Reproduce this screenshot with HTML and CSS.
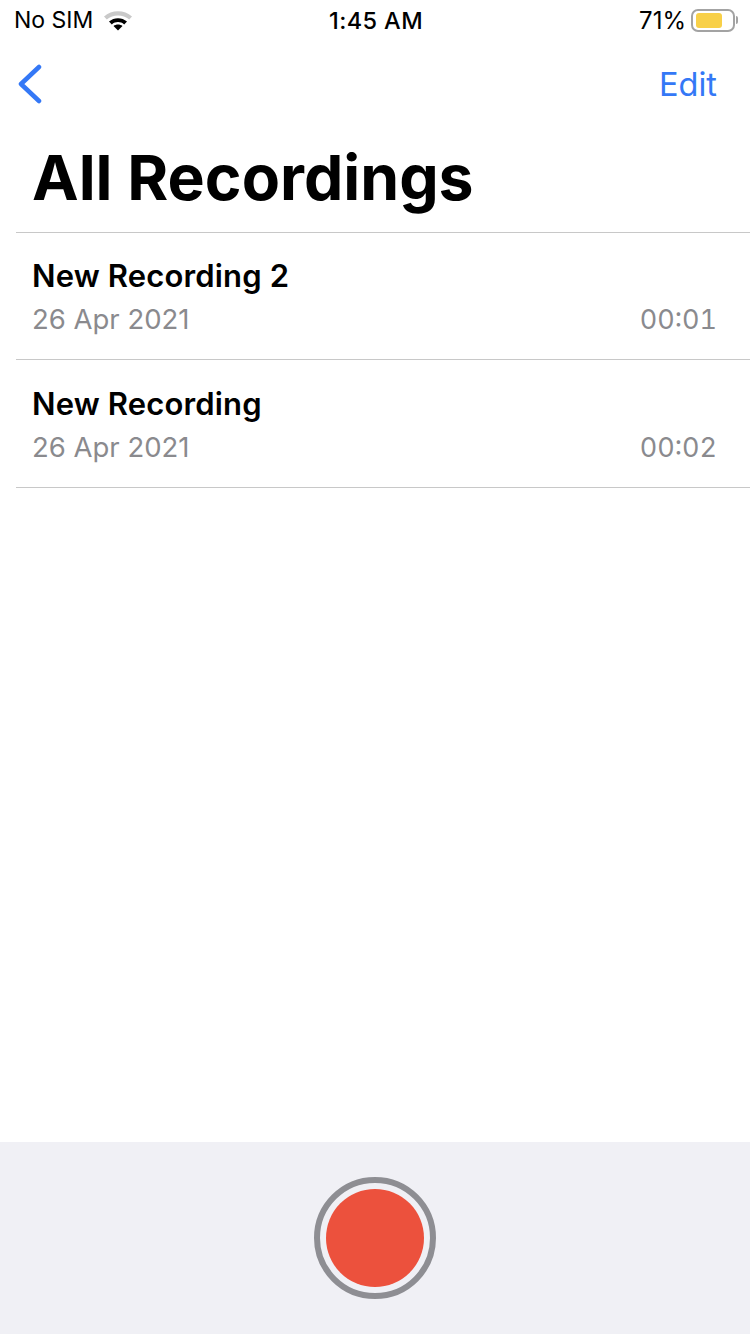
FILE: index.html
```html
<!DOCTYPE html>
<html lang="en">

<head>
   <meta charset="utf-8" />
   <title>All Recordings</title>
   <meta name="viewport" content="width=device-width, initial-scale=1">
   <link rel="stylesheet" href="styles.css">
</head>

<body>
   <div class="screen">
      <div class="status-bar">
         <div class="status-left">
            <span>No SIM</span>
            <svg class="wifi" width="30" height="22" viewBox="0 0 30 22">
               <path d="M1 7.500 C8.500 0.500 21.500 0.500 29 7.500 L26.200 10.500 C20 5 10 5 3.800 10.500 Z" fill="#c9c9c9" />
               <path d="M6 12.500 C11 8 19 8 24 12.500 L21.200 15.400 C17.500 12.300 12.500 12.300 8.800 15.400 Z" fill="#000" />
               <path d="M10.500 17 C13 15 17 15 19.500 17 L15 21.500 Z" fill="#000" />
            </svg>
         </div>
         <div class="status-time">1:45 AM</div>
         <div class="status-right">
            <span>71%</span>
            <div class="battery">
               <div class="battery-level"></div>
            </div>
            <div class="battery-cap"></div>
         </div>
      </div>

      <div class="nav-bar">
         <svg class="back" width="26" height="40" viewBox="0 0 26 40">
            <path d="M22 3 L4 20 L22 37" fill="none" stroke="#3478f6" stroke-width="4.500" stroke-linecap="round"
               stroke-linejoin="round" />
         </svg>
         <a class="edit" href="#">Edit</a>
      </div>

      <h1 class="title">All Recordings</h1>

      <ul class="recordings">
         <li class="recording">
            <div class="recording-name">New Recording 2</div>
            <div class="recording-meta">
               <span>26 Apr 2021</span>
               <span class="recording-length">00:01</span>
            </div>
         </li>
         <li class="recording">
            <div class="recording-name">New Recording</div>
            <div class="recording-meta">
               <span>26 Apr 2021</span>
               <span class="recording-length">00:02</span>
            </div>
         </li>
      </ul>

      <div class="record-bar">
         <button class="record-ring" aria-label="Record">
            <span class="record-dot"></span>
         </button>
      </div>
   </div>
</body>

</html>
```

FILE: styles.css
```css
* {
   box-sizing: border-box
}

html,
body {
   margin: 0;
   padding: 0;
}

body {
   background: #fff;
   color: #000;
   font-family: "Inter", "Liberation Sans", sans-serif;
}

.screen {
   width: 750px;
   height: 1334px;
   display: flex;
   flex-direction: column;
   overflow: hidden;
}

.status-bar {
   height: 40px;
   padding: 0 12px 0 14px;
   display: grid;
   grid-template-columns: 1fr auto 1fr;
   align-items: center;
   font-size: 23px;
}

.status-left {
   display: flex;
   align-items: center;
   gap: 10px;
}

.status-time {
   font-size: 23.500px;
   font-weight: 500;
   letter-spacing: 0.400px;
}

.status-right {
   display: flex;
   align-items: center;
   justify-content: flex-end;
}

.status-right span {
   font-size: 24px;
}

.battery {
   width: 44px;
   height: 23px;
   margin-left: 5px;
   padding: 2px 3px;
   border: 2px solid #a3a3a3;
   border-radius: 7px;
}

.battery-level {
   width: 26px;
   height: 100%;
   background: #f8d048;
   border-radius: 3px;
}

.battery-cap {
   width: 2px;
   height: 8px;
   margin-left: 1px;
   background: #a3a3a3;
   border-radius: 0 2px 2px 0;
}

.nav-bar {
   height: 88px;
   padding: 0 33px 0 17px;
   display: flex;
   align-items: center;
   justify-content: space-between;
}

.edit {
   color: #3478f6;
   font-size: 32.500px;
   text-decoration: none;
}

.title {
   margin: 0 0 0 32px;
   height: 104px;
   font-size: 62.500px;
   font-weight: 700;
   line-height: 98px;
}

.recordings {
   list-style: none;
   margin: 0 0 0 16px;
   padding: 0;
   border-top: 1px solid #c8c8c8;
}

.recording {
   height: 127.400px;
   padding: 24.300px 33px 0 16px;
   border-bottom: 1px solid #c8c8c8;
}

.recording-name {
   font-size: 31px;
   font-weight: 600;
   letter-spacing: 0.150px;
   line-height: 38px;
}

.recording-meta {
   margin-top: 6px;
   display: flex;
   align-items: baseline;
   justify-content: space-between;
   color: #8a8a8e;
   font-size: 27.500px;
   line-height: 36px;
}

.recording-length {
   font-size: 27px;
   font-variant-numeric: tabular-nums;
}

.record-bar {
   margin-top: auto;
   height: 192px;
   background: #f0f0f5;
   padding-top: 35px;
   display: flex;
   justify-content: center;
}

.record-ring {
   width: 122px;
   height: 122px;
   padding: 0;
   background: none;
   border: 6px solid #8e8e93;
   border-radius: 50%;
   display: flex;
   align-items: center;
   justify-content: center;
}

.record-dot {
   width: 98px;
   height: 98px;
   background: #ec513d;
   border-radius: 50%;
}
```
